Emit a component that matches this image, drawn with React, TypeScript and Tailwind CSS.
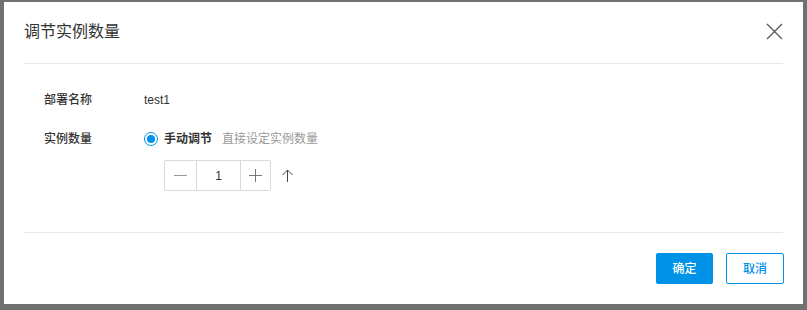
import React from "react";

const font = { fontFamily: '"Liberation Sans", "Noto Sans CJK SC", sans-serif' };

export default function App() {
  return (
    <div
      className="w-[807px] h-[310px] bg-[#707070] pl-[4px] pt-[2px] overflow-hidden relative"
      style={font}
    >
      <div className="w-[799px] h-[302px] bg-white flex flex-col">
        {/* Header */}
        <div className="mx-[20px] h-[62px] border-b border-[#e8e8e8] flex items-center justify-between">
          <div className="text-[16px] text-[#333] leading-none pb-[1px]">调节实例数量</div>
          <svg width="17" height="17" viewBox="0 0 17 17" className="mb-[3px]">
            <path d="M1 1 L16 16 M16 1 L1 16" stroke="#555" strokeWidth="1.3" fill="none" />
          </svg>
        </div>

        {/* Body */}
        <div className="mx-[20px] h-[169px] border-b border-[#e8e8e8] pl-[20px] pt-[26px] text-[12px]">
          <div className="flex items-center h-[20px]">
            <div className="w-[100px] text-[#333] font-medium">部署名称</div>
            <div className="text-[#333]">test1</div>
          </div>
          <div className="flex items-center h-[20px] mt-[19px]">
            <div className="w-[100px] text-[#333] font-medium">实例数量</div>
            <div className="flex items-center">
              <span className="w-[14px] h-[14px] rounded-full border border-[#0092e6] flex items-center justify-center">
                <span className="w-[8px] h-[8px] rounded-full bg-[#0092e6]" />
              </span>
              <span className="ml-[6px] font-bold text-[#333]">手动调节</span>
              <span className="ml-[10px] text-[#999]">直接设定实例数量</span>
            </div>
          </div>
          <div className="flex items-center mt-[11px] pl-[120px]">
            <div className="flex h-[31px] border border-[#d9d9d9] rounded-[2px]">
              <div className="w-[32px] flex items-center justify-center border-r border-[#d9d9d9]">
                <span className="w-[13px] h-[1px] bg-[#999]" />
              </div>
              <div className="w-[44px] flex items-center justify-center text-[12px] text-[#333] border-r border-[#d9d9d9]">
                1
              </div>
              <div className="w-[29px] flex items-center justify-center">
                <svg width="13" height="13" viewBox="0 0 13 13">
                  <path d="M0 6.5 H13 M6.5 0 V13" stroke="#777" strokeWidth="1" fill="none" />
                </svg>
              </div>
            </div>
            <svg width="11" height="13" viewBox="0 0 11 13" className="ml-[11px]">
              <path d="M5.5 1 V13 M0.5 6 L5.5 1 L10.5 6" stroke="#444" strokeWidth="1" fill="none" />
            </svg>
          </div>
        </div>

        {/* Footer */}
        <div className="mx-[19px] flex justify-end gap-[13px] pt-[20px]">
          <button className="w-[57px] h-[31px] bg-[#0092e6] text-white text-[12px] font-medium rounded-[2px]">
            确定
          </button>
          <button className="w-[58px] h-[31px] bg-white border border-[#0092e6] text-[#0092e6] text-[12px] font-medium rounded-[2px]">
            取消
          </button>
        </div>
      </div>
    </div>
  );
}
